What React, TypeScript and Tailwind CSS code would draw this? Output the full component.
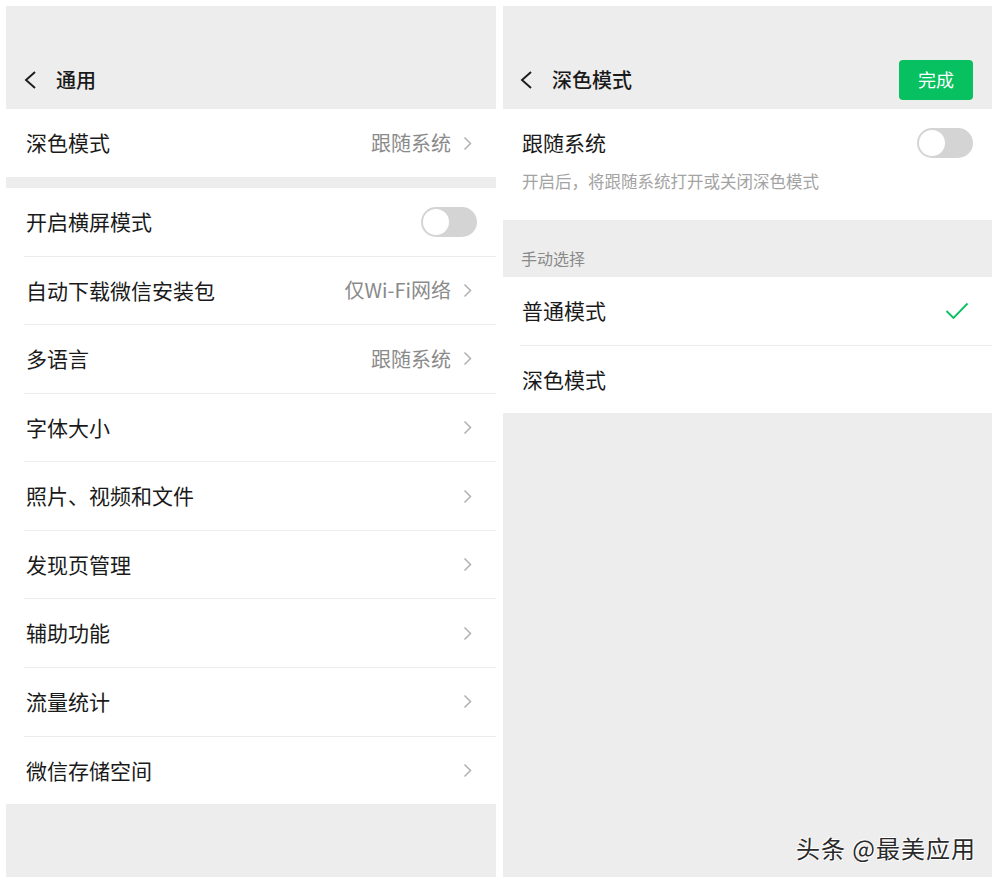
import React from "react";

const font = { fontFamily: '"Noto Sans CJK SC", "Noto Sans", sans-serif' };

const Chevron = () => (
  <svg width="9" height="15" viewBox="0 0 9 15" className="shrink-0">
    <path d="M1.5 1.5 L7.5 7.5 L1.5 13.5" fill="none" stroke="#b4b4b4" strokeWidth="1.6" />
  </svg>
);

const Back = () => (
  <svg width="12" height="18" viewBox="0 0 12 18" className="shrink-0">
    <path d="M11 1 L2 9 L11 17" fill="none" stroke="#1c1c1c" strokeWidth="1.9" />
  </svg>
);

const Toggle = () => (
  <div className="w-[56px] h-[30px] rounded-full bg-[#d4d4d4] p-[2px] flex items-center">
    <div className="w-[26px] h-[26px] rounded-full bg-white" />
  </div>
);

type Row = { label: string; value?: string; toggle?: boolean; chevron?: boolean };

const rows: Row[] = [
  { label: "开启横屏模式", toggle: true },
  { label: "自动下载微信安装包", value: "仅Wi-Fi网络", chevron: true },
  { label: "多语言", value: "跟随系统", chevron: true },
  { label: "字体大小", chevron: true },
  { label: "照片、视频和文件", chevron: true },
  { label: "发现页管理", chevron: true },
  { label: "辅助功能", chevron: true },
  { label: "流量统计", chevron: true },
  { label: "微信存储空间", chevron: true },
];

const LeftPanel = () => (
  <div className="w-[490px] h-[871px] bg-[#ededed] flex flex-col">
    <div className="h-[103px] flex items-end">
      <div className="h-[58px] flex items-center pl-[18px] gap-[20px]">
        <Back />
        <span className="text-[20px] font-medium text-[#1a1a1a]">通用</span>
      </div>
    </div>
    <div className="h-[68px] bg-white flex items-center justify-between pl-[20px] pr-[24px]">
      <span className="text-[21px] text-[#1a1a1a]">深色模式</span>
      <div className="flex items-center gap-[12px]">
        <span className="text-[20px] text-[#8a8a8a]">跟随系统</span>
        <Chevron />
      </div>
    </div>
    <div className="h-[11px]" />
    <div className="h-[616px] bg-white flex flex-col pl-[18px]">
      {rows.map((r, i) => (
        <div
          key={r.label}
          className={
            "flex-1 flex items-center justify-between pl-[2px] pr-[24px] " +
            (i > 0 ? "border-t border-[#ececec]" : "")
          }
        >
          <span className="text-[21px] text-[#1a1a1a]">{r.label}</span>
          {r.toggle ? (
            <div className="-mr-[5px]">
              <Toggle />
            </div>
          ) : (
            <div className="flex items-center gap-[12px]">
              {r.value && <span className="text-[20px] text-[#8a8a8a]">{r.value}</span>}
              {r.chevron && <Chevron />}
            </div>
          )}
        </div>
      ))}
    </div>
  </div>
);

const RightPanel = () => (
  <div className="w-[489px] h-[871px] bg-[#ededed] flex flex-col">
    <div className="h-[103px] flex items-end">
      <div className="h-[58px] w-full flex items-center justify-between pl-[17px] pr-[19px]">
        <div className="flex items-center gap-[20px]">
          <Back />
          <span className="text-[20px] font-medium text-[#1a1a1a]">深色模式</span>
        </div>
        <div className="w-[74px] h-[40px] rounded-[4px] bg-[#07c160] flex items-center justify-center -mt-[1px]">
          <span className="text-[18px] text-white">完成</span>
        </div>
      </div>
    </div>
    <div className="h-[111px] bg-white pl-[19px] pr-[19px] pt-[19px]">
      <div className="h-[30px] flex items-center justify-between">
        <span className="text-[21px] text-[#1a1a1a]">跟随系统</span>
        <Toggle />
      </div>
      <div className="mt-[11px] text-[16.5px] leading-[24px] text-[#a3a3a3]">
        开启后，将跟随系统打开或关闭深色模式
      </div>
    </div>
    <div className="h-[57px] flex items-end pl-[18px] pb-[8px]">
      <span className="text-[16px] leading-[22px] text-[#8a8a8a]">手动选择</span>
    </div>
    <div className="bg-white pl-[17px]">
      <div className="h-[68px] flex items-center justify-between pl-[2px] pr-[23px]">
        <span className="text-[21px] text-[#1a1a1a]">普通模式</span>
        <svg width="24" height="18" viewBox="0 0 24 18">
          <path d="M1.5 9 L8.5 16 L22.5 1.5" fill="none" stroke="#07c160" strokeWidth="1.8" />
        </svg>
      </div>
      <div className="h-[68px] flex items-center pl-[2px] border-t border-[#ececec]">
        <span className="text-[21px] text-[#1a1a1a]">深色模式</span>
      </div>
    </div>
    <div className="flex-1 flex items-end justify-end pr-[16px] pb-[13px]">
      <span className="text-[24px] leading-[32px] tracking-[1px] text-[#2a2a2a] [text-shadow:1px_1px_0_#fff,-1px_-1px_0_#fff]">
        头条 @最美应用
      </span>
    </div>
  </div>
);

export default function App() {
  return (
    <div className="w-[1000px] h-[885px] bg-white pt-[6px] pl-[6px] flex gap-[7px]" style={font}>
      <LeftPanel />
      <RightPanel />
    </div>
  );
}
